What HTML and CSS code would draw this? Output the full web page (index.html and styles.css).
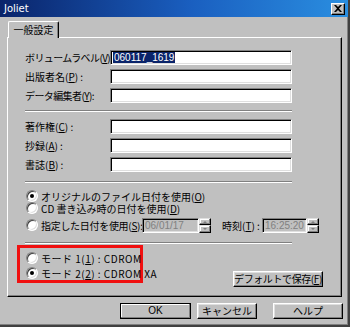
FILE: index.html
```html
<!DOCTYPE html>
<html lang="ja">
<head>
<meta charset="utf-8">
<link rel="stylesheet" href="styles.css">
</head>
<body>
<div class="window">
  <div class="titlebar">
    <span class="title">Joliet</span>
    <span class="close"><svg width="8" height="7" viewBox="0 0 8 7"><path d="M0 0h2l2 2 2-2h2L5 3.5 8 7H6L4 5 2 7H0l3-3.5z" fill="#000"/></svg></span>
  </div>
  <div class="tabs"><div class="tab">一般設定</div></div>
  <div class="panel">
    <div class="fields first">
      <div class="row"><span class="lbl tight">ボリュームラベル(<u>V</u>):</span><span class="input"><span class="sel">060117_1619</span></span></div>
      <div class="row"><span class="lbl">出版者名(<u>P</u>) :</span><span class="input"></span></div>
      <div class="row"><span class="lbl tight">データ編集者(<u>Y</u>):</span><span class="input"></span></div>
    </div>
    <div class="sep"></div>
    <div class="fields second">
      <div class="row"><span class="lbl">著作権(<u>C</u>) :</span><span class="input"></span></div>
      <div class="row"><span class="lbl">抄録(<u>A</u>) :</span><span class="input"></span></div>
      <div class="row"><span class="lbl">書誌(<u>B</u>) :</span><span class="input"></span></div>
    </div>
    <div class="sep sep2"></div>
    <div class="radios">
      <div class="rrow"><span class="radio checked"></span><span class="rtext">オリジナルのファイル日付を使用(<u>O</u>)</span></div>
      <div class="rrow"><span class="radio"></span><span class="rtext">CD 書き込み時の日付を使用(<u>D</u>)</span></div>
      <div class="rrow date">
        <span class="radio"></span><span class="rtext dtext">指定した日付を使用(<u>S</u>):</span>
        <span class="input dis dinput">06/01/17</span><span class="spin"><span class="sb up"></span><span class="sb down"></span></span>
        <span class="tlabel">時刻(<u>T</u>) :</span>
        <span class="input dis tinput">16:25:20</span><span class="spin"><span class="sb up"></span><span class="sb down"></span></span>
      </div>
    </div>
    <div class="sep sep3"></div>
    <div class="modes">
      <div class="redbox">
        <div class="rrow mode"><span class="radio"></span><span class="rtext wide">モード 1(<u>1</u>) : CDROM</span></div>
        <div class="rrow mode"><span class="radio checked"></span><span class="rtext wide">モード 2(<u>2</u>) : CDROM XA</span></div>
      </div>
      <div class="btn defbtn">デフォルトで保存(<u>F</u>)</div>
    </div>
  </div>
  <div class="buttons">
    <div class="btn ok">OK</div>
    <div class="btn cancel">キャンセル</div>
    <div class="btn help">ヘルプ</div>
  </div>
</div>
</body>
</html>
```
FILE: styles.css
```css
html, body { margin: 0; padding: 0; }
body {
  width: 350px; height: 327px; overflow: hidden;
  font-family: "Noto Sans CJK JP", "Liberation Sans", sans-serif;
  font-size: 10px;
  color: #000;
}
.window {
  box-sizing: border-box;
  width: 350px; height: 327px;
  background: #c0c0c0;
  border-right: 2px solid #404040;
  border-bottom: 2px solid #404040;
  box-shadow: inset -1px -1px #808080;
}
.titlebar {
  height: 17px;
  background: linear-gradient(to right, #0a246a, #1a5fc0 55%, #2a8ee0);
  display: flex; align-items: center; justify-content: space-between;
  padding: 0 3px 0 4px;
}
.title { color: #fff; font-family: "DejaVu Sans", sans-serif; font-size: 10px; line-height: 17px; }
.close {
  box-sizing: border-box;
  width: 14px; height: 12px;
  background: #c0c0c0;
  border: 1px solid; border-color: #fff #000 #000 #fff;
  box-shadow: inset -1px -1px #808080;
  display: flex; align-items: center; justify-content: center;
}
.close svg { display: block; }
.tabs { display: flex; padding: 4px 0 0 8px; height: 16px; position: relative; z-index: 1; }
.tab {
  box-sizing: border-box;
  width: 51px; height: 17px;
  background: #c0c0c0;
  border: 1px solid; border-color: #fff #000 transparent #fff;
  border-bottom: none;
  box-shadow: inset -1px 0 #808080;
  border-radius: 2px 2px 0 0;
  display: flex; justify-content: center; align-items: center;
  line-height: 14px;
}
.panel {
  box-sizing: border-box;
  margin-left: 7px; width: 335px; height: 260px;
  border: 1px solid; border-color: #fff #000 #000 #fff;
  box-shadow: inset -1px -1px #808080;
  padding: 12px 0 0 17px;
  display: flex; flex-direction: column;
}
.fields { display: flex; flex-direction: column; gap: 4px; }
.row { display: flex; align-items: center; height: 15px; line-height: 13px; }
.lbl { width: 85px; flex: none; white-space: nowrap; }
.lbl.tight { letter-spacing: -0.6px; }
.input {
  box-sizing: border-box;
  width: 182px; height: 15px; flex: none;
  background: #fff;
  border: 1px solid; border-color: #808080 #fff #fff #808080;
  box-shadow: inset 1px 1px #000, inset -1px -1px #dfdfdf;
  display: flex; align-items: center; padding-left: 2px;
  font-family: "Liberation Sans", sans-serif;
}
.sel { background: #0a246a; color: #fff; line-height: 11px; padding: 0 1px; }
.sep {
  width: 267px; height: 0;
  border-top: 1px solid #808080; border-bottom: 1px solid #fff;
  margin-top: 7px;
}
.second { margin-top: 7px; }
.sep2 { margin-top: 9px; }
.radios { margin-top: 7px; display: flex; flex-direction: column; }
.rrow { display: flex; align-items: center; height: 12px; line-height: 11px; white-space: nowrap; }
.rrow.date { height: 16px; margin-top: 3px; }
.radio {
  box-sizing: border-box;
  width: 12px; height: 12px; flex: none;
  border-radius: 50%;
  background: #fff;
  border: 1px solid; border-color: #808080 #fff #fff #808080;
  box-shadow: inset 1px 1px #404040, inset -1px -1px #dfdfdf;
  position: relative;
  margin-left: 1px;
}
.radio.checked::after {
  content: ""; position: absolute; left: 3px; top: 3px;
  width: 4px; height: 4px; border-radius: 50%; background: #000;
}
.rtext { margin-left: 3px; }
.rtext.wide { letter-spacing: 0.5px; }
.dtext { width: 101px; flex: none; letter-spacing: -0.3px; }
.dinput { width: 57px; }
.tinput { width: 45px; }
.input.dis { background: #c0c0c0; color: #808080; }
.spin { display: flex; flex-direction: column; width: 12px; height: 15px; flex: none; }
.sb {
  box-sizing: border-box; flex: 1;
  background: #c0c0c0;
  border: 1px solid; border-color: #dfdfdf #000 #000 #dfdfdf;
  box-shadow: inset -1px -1px #808080, inset 1px 1px #fff;
  position: relative;
}
.sb::after {
  content: ""; position: absolute; left: 3px; width: 0; height: 0;
  border-left: 2px solid transparent; border-right: 2px solid transparent;
}
.sb.up::after { top: 2px; border-bottom: 2px solid #808080; }
.sb.down::after { top: 2px; border-top: 2px solid #808080; }
.tlabel { margin-left: 11px; width: 40px; flex: none; }
.sep3 { margin-top: 9px; }
.modes { display: flex; margin-top: 1px; height: 42px; }
.redbox {
  box-sizing: border-box;
  margin-left: -8px;
  width: 126px; height: 38px;
  border: 3px solid #f01010;
  padding: 4px 0 0 5px;
  display: flex; flex-direction: column; gap: 3px;
}
.btn {
  box-sizing: border-box;
  height: 17px;
  background: #c0c0c0;
  border: 1px solid; border-color: #fff #000 #000 #fff;
  box-shadow: inset -1px -1px #808080, inset 1px 1px #dfdfdf;
  display: flex; align-items: center; justify-content: center;
  white-space: nowrap;
  line-height: 12px;
}
.defbtn { align-self: flex-end; margin-left: 90px; width: 90px; height: 16px; letter-spacing: -0.4px; }
.buttons { display: flex; margin-top: 6px; height: 16px; }
.ok { margin-left: 120px; width: 71px; height: 16px; border-color: #000; box-shadow: inset -1px -1px #808080, inset 1px 1px #fff; font-family: "Liberation Sans", sans-serif; }
.cancel { margin-left: 6px; width: 60px; height: 16px; }
.help { margin-left: 16px; width: 70px; height: 16px; }
```
